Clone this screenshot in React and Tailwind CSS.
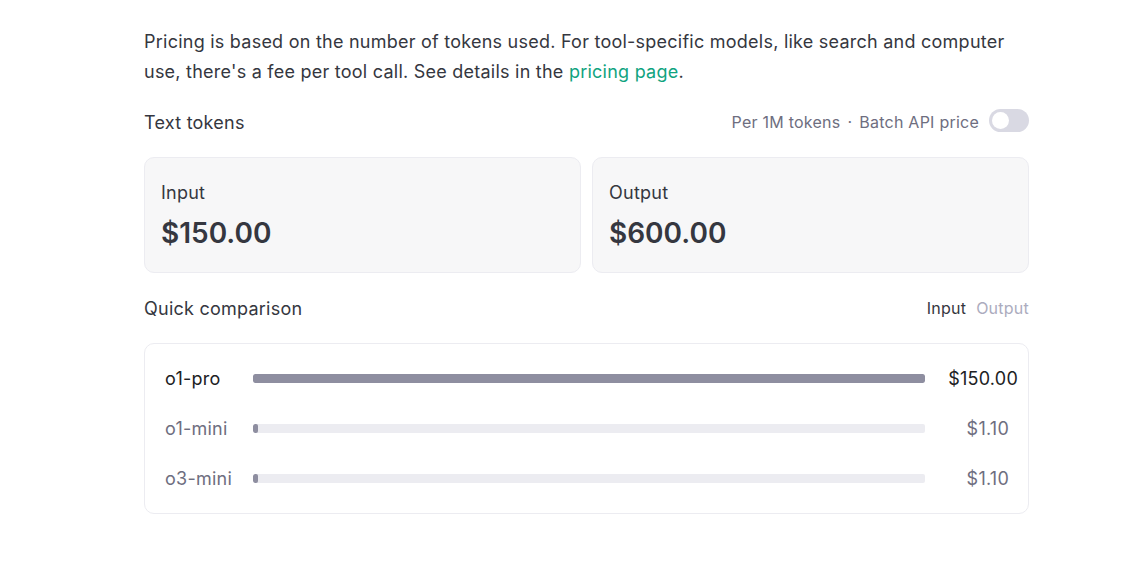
import React from 'react';

// ---------------------------------------------------------------------------
// Data
// ---------------------------------------------------------------------------

const MODELS = [
  { name: 'o1-pro',  price: '$150.00', pct: 100, active: true },
  { name: 'o1-mini', price: '$1.10',   pct: 0.7 },
  { name: 'o3-mini', price: '$1.10',   pct: 0.7 },
];

function PriceCard({ label, price }) {
  return (
    <div className="flex-1 h-[116px] rounded-[10px] border border-[#ececf1] bg-[#f7f7f8] px-4 pt-[23px]">
      <div className="text-[18px] leading-[24px] text-[#353740]">{label}</div>
      <div className="mt-[11px] text-[28px] leading-[34px] font-semibold tracking-[0] text-[#353740]">{price}</div>
    </div>
  );
}

function ModelRow({ m }) {
  return (
    <div className="flex items-center h-[50px]">
      <div className={`w-[88px] text-[18px] ${m.active ? 'text-[#202123]' : 'text-[#6e6e80]'}`}>{m.name}</div>
      <div className="flex-1 h-[9px] bg-[#ececf1] rounded-[2px] overflow-hidden">
        <div
          className="h-full bg-[#8e8ea0] rounded-[2px] min-w-[4px]"
          style={{ width: `${m.pct}%` }}
        />
      </div>
      <div className={`w-[93px] text-right text-[18px] ${m.active ? 'text-[#202123] pr-0' : 'text-[#6e6e80] pr-[9px]'}`}>
        {m.price}
      </div>
    </div>
  );
}

export default function App() {
  return (
    <div className="min-h-[561px] bg-white font-['Inter',sans-serif] tracking-[0.015em]">
      <div className="w-[885px] ml-[144px] pt-[27px]">
        <p className="text-[18px] leading-[30px] text-[#353740]">
          Pricing is based on the number of tokens used. For tool-specific models, like search and computer<br />
          use, there's a fee per tool call. See details in the{' '}
          <a className="text-[#10a37f]">pricing page</a>.
        </p>

        {/* Text tokens header */}
        <div className="flex items-center justify-between mt-[17px] h-[36px]">
          <div className="text-[18px] text-[#353740]">Text tokens</div>
          <div className="flex items-center text-[16px] text-[#6e6e80]">
            <span>Per 1M tokens</span>
            <span className="mx-[7px]">·</span>
            <span>Batch API price</span>
            <span className="ml-[10px] w-[40px] h-[23px] rounded-full bg-[#d9d9e3] p-[3px] mb-[4px]">
              <span className="block w-[17px] h-[17px] rounded-full bg-white" />
            </span>
          </div>
        </div>

        {/* Price cards */}
        <div className="flex gap-[11px] mt-[17px]">
          <PriceCard label="Input" price="$150.00" />
          <PriceCard label="Output" price="$600.00" />
        </div>

        {/* Quick comparison header */}
        <div className="flex items-center justify-between mt-[17px] h-[36px]">
          <div className="text-[18px] text-[#353740]">Quick comparison</div>
          <div className="flex gap-[10px] text-[16px]">
            <span className="text-[#353740]">Input</span>
            <span className="text-[#acacbe]">Output</span>
          </div>
        </div>

        {/* Comparison box */}
        <div className="mt-[17px] h-[171px] rounded-[10px] border border-[#ececf1] bg-white pl-5 pr-[10px] pt-[9px]">
          {MODELS.map((m) => (
            <ModelRow key={m.name} m={m} />
          ))}
        </div>
      </div>
    </div>
  );
}
